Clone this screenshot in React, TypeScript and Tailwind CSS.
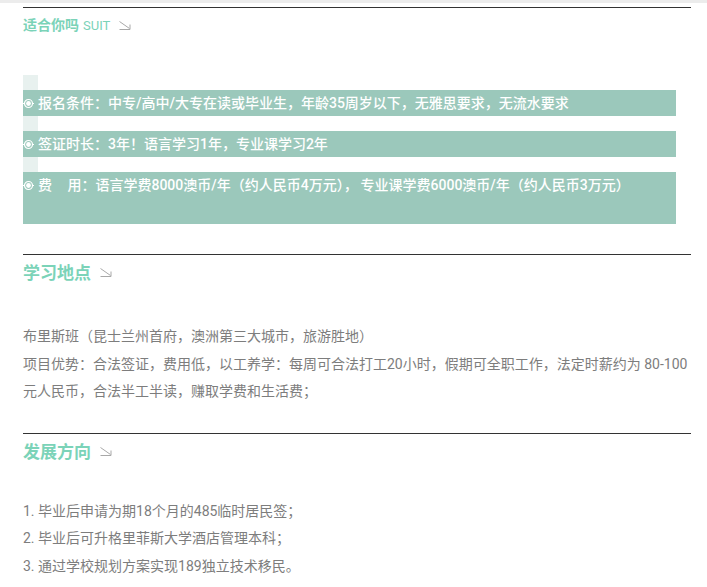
import React from 'react';

const cjk = "font-['Roboto','Noto_Sans_CJK_SC',sans-serif]";

const Arrow = () => (
  <svg width="12" height="10" viewBox="0 0 12 10" className="shrink-0" fill="none" stroke="#a8a8a8" strokeWidth="1">
    <path d="M0.500 0.500l10 7" />
    <path d="M11 3.500v5H0.500" />
  </svg>
);

const Eye = () => (
  <svg width="11" height="11" viewBox="0 0 11 11" className="shrink-0" fill="none" stroke="#ffffff">
    <path d="M0 5.500h1.500M9.500 5.500H11" strokeWidth="1" />
    <circle cx="5.500" cy="5.500" r="4" strokeWidth="1.200" />
    <circle cx="5.500" cy="5.500" r="2.400" fill="#ffffff" stroke="none" />
  </svg>
);

const bars = [
  { text: '报名条件：中专/高中/大专在读或毕业生，年龄35周岁以下，无雅思要求，无流水要求', cls: 'h-[26px]' },
  { text: '签证时长：3年！语言学习1年，专业课学习2年', cls: 'h-[26px]' },
  { text: '费　\u200A用：语言学费8000澳币/年（约人民币4万元），\u200A\u200A专业课学费6000澳币/年（约人民币3万元）', cls: 'h-[52px]' },
];

const Heading = ({ title }: { title: string }) => (
  <div className="flex items-center gap-[9px] border-t border-[#333333] pt-[7px] h-[30px]">
    <h2 className="text-[17px] font-bold leading-[24px] text-[#7bd3b8]">{title}</h2>
    <Arrow />
  </div>
);

const App = () => {
  return (
    <div className={`${cjk} h-[587px] w-[707px] overflow-hidden bg-white border-t-[3px] border-[#ececec]`}>
      <div className="ml-[23px] mr-[16px] pt-[4px]">
        <div className="flex items-center border-t border-[#333333] h-[38px] pb-[2px]">
          <span className="text-[14px] font-bold text-[#7bd3b8]">适合你吗</span>
          <span className="ml-[4px] text-[13px] text-[#7bd3b8]">SUIT</span>
          <span className="ml-[9px]"><Arrow /></span>
        </div>

        <div className="relative mt-[45px] w-[653px]">
          <div className="absolute left-0 top-[-15px] h-[97px] w-[15px] bg-[#e8f1ef]" />
          <div className="relative flex flex-col gap-[15px]">
            {bars.map((bar, index) => (
              <div key={index} className={`${bar.cls} flex items-start bg-[#9bc8bb] text-[14px] font-medium leading-[26px] text-white`}>
                <span className="mt-[8px] w-[15px]"><Eye /></span>
                <span className="whitespace-nowrap">{bar.text}</span>
              </div>
            ))}
          </div>
        </div>

        <div className="mt-[30px]">
          <Heading title="学习地点" />
          <div className="mt-[39px] text-[14px] leading-[27.500px] text-[#7d7d7d]">
            <p>布里斯班（昆士兰州首府，澳洲第三大城市，旅游胜地）</p>
            <p>项目优势：合法签证，费用低，以工养学：每周可合法打工20小时，假期可全职工作，法定时薪约为 80-100元人民币，合法半工半读，赚取学费和生活费；</p>
          </div>
        </div>

        <div className="mt-[27px]">
          <Heading title="发展方向" />
          <div className="mt-[35px] text-[14px] leading-[27.500px] text-[#7d7d7d]">
            <p>1. 毕业后申请为期18个月的485临时居民签；</p>
            <p>2. 毕业后可升格里菲斯大学酒店管理本科；</p>
            <p>3. 通过学校规划方案实现189独立技术移民。</p>
          </div>
        </div>
      </div>
    </div>
  );
};

export default App;
